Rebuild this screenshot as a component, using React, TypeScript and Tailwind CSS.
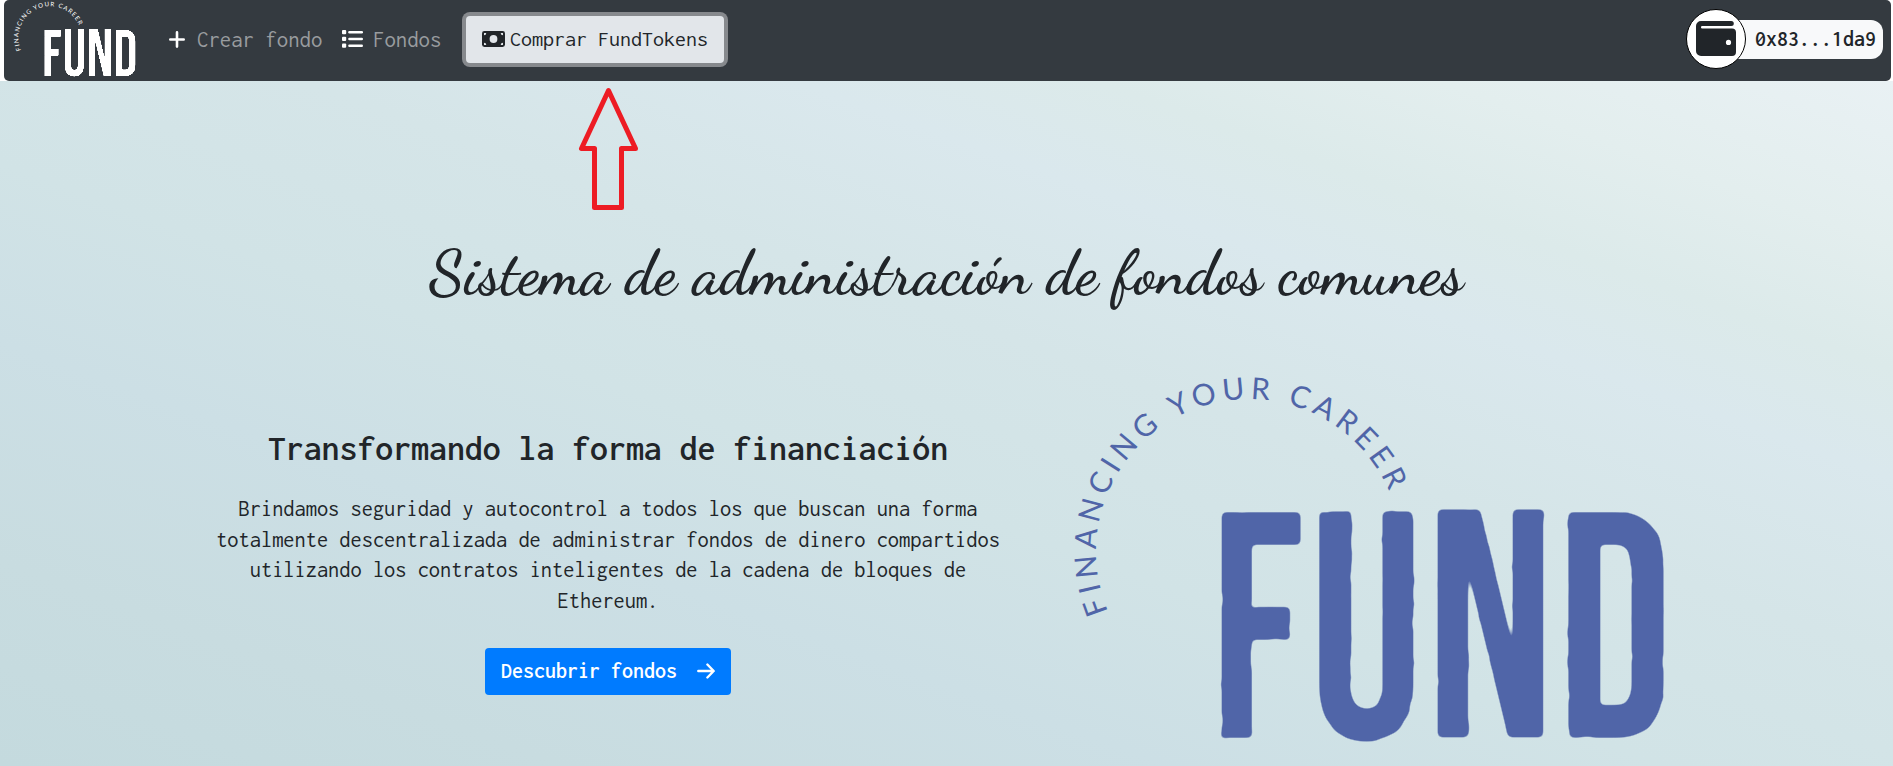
type LetterProps = { char: string; x: number; y: number; sx: number; sy: number; filter: string };

function StampLetter({ char, x, y, sx, sy, filter }: LetterProps) {
  return (
    <g filter={filter}>
      <text
        transform={`translate(${x} ${y}) scale(${sx} ${sy})`}
        fontSize={320}
        fontFamily="'Bebas Neue', 'Roboto Condensed', Roboto, sans-serif"
      >
        {char}
      </text>
    </g>
  );
}

function Logo({ id, color, className, arcWeight = 400 }: { id: string; color: string; className: string; arcWeight?: number }) {
  const stamp = `url(#${id}-stamp)`;
  return (
    <svg viewBox="0 0 620 390" className={className} role="img" aria-label="Fund">
      <defs>
        <filter id={`${id}-stamp`} x="-10%" y="-10%" width="120%" height="120%" colorInterpolationFilters="sRGB">
          <feTurbulence type="fractalNoise" baseFrequency="0.05" numOctaves={3} seed={4} result="noise" />
          <feDisplacementMap in="SourceGraphic" in2="noise" scale={2.5} xChannelSelector="R" yChannelSelector="G" />
          <feGaussianBlur stdDeviation="2.4" />
          <feComponentTransfer result="shape">
            <feFuncA type="linear" slope="5" intercept="-1.8" />
          </feComponentTransfer>
          <feFlood floodColor={color} />
          <feComposite in2="shape" operator="in" />
        </filter>
        <path id={`${id}-arc`} d="M 48.1 241.5 A 152.8 152.8 0 1 1 341.600 181.300" />
      </defs>
      <text fill={color} fontFamily="Lato, sans-serif" fontSize={30} fontWeight={arcWeight}>
        <textPath href={`#${id}-arc`} textLength={478.5} lengthAdjust="spacing">
          FINANCING YOUR CAREER
        </textPath>
      </text>
      <StampLetter char="F" x={151} y={367.5} sx={0.84} sy={1.005} filter={stamp} />
      <StampLetter char="U" x={249} y={368} sx={0.89} sy={1.01} filter={stamp} />
      <StampLetter char="N" x={365.5} y={367} sx={0.95} sy={1.015} filter={stamp} />
      <StampLetter char="D" x={497} y={367.5} sx={0.89} sy={1.005} filter={stamp} />
    </svg>
  );
}

function PlusIcon() {
  return (
    <svg viewBox="0 0 16 17" className="h-[17px] w-4" stroke="#fff" strokeWidth="2.6" strokeLinecap="round">
      <path d="M8 1.4V15.6M1.3 8.5H14.7" />
    </svg>
  );
}

function ListIcon() {
  return (
    <svg viewBox="0 0 21 18" className="h-[18px] w-[21px]" fill="#fff">
      <rect x="0" y="0" width="4.2" height="4.2" rx="1" />
      <rect x="0" y="6.8" width="4.2" height="4.2" rx="1" />
      <rect x="0" y="13.6" width="4.2" height="4.2" rx="1" />
      <rect x="6.2" y="0.9" width="14.8" height="2.5" rx="1.2" />
      <rect x="6.2" y="7.7" width="14.8" height="2.5" rx="1.2" />
      <rect x="6.2" y="14.5" width="14.8" height="2.5" rx="1.2" />
    </svg>
  );
}

function CashIcon() {
  return (
    <svg viewBox="0 0 23 16" className="h-4 w-[23px]">
      <rect width="23" height="16" rx="2.4" fill="#212529" />
      <circle cx="11.5" cy="8" r="3.9" fill="#e2e6ea" />
      <path
        d="M2 4.300V2H4.300A2.300 2.300 0 0 1 2 4.300ZM21 4.300V2H18.700A2.300 2.300 0 0 0 21 4.300ZM2 11.700V14H4.300A2.300 2.300 0 0 0 2 11.700ZM21 11.700V14H18.700A2.300 2.300 0 0 1 21 11.700Z"
        fill="#e2e6ea"
      />
    </svg>
  );
}

function WalletIcon() {
  return (
    <svg viewBox="0 0 40 35" className="h-[35px] w-10">
      <path
        fill="#212529"
        fillRule="evenodd"
        d="M5 0H35.3A2.5 2.5 0 0 1 35.3 5H6.2A1.2 1.2 0 0 0 6.2 7.5H36A4 4 0 0 1 40 11.500V31A4 4 0 0 1 36 35H5A5 5 0 0 1 0 30V5A5 5 0 0 1 5 0ZM32.500 18.800A2.600 2.600 0 1 0 32.500 24A2.600 2.600 0 1 0 32.500 18.800Z"
      />
    </svg>
  );
}

export default function App() {
  return (
    <div className="relative h-[766px] w-full overflow-hidden bg-white font-['Inconsolata','Liberation_Mono',monospace] text-[22.4px] text-[#212529]">
      <nav className="mr-0.5 ml-1 flex h-[81px] items-center rounded-[5px] bg-[#343a40] pb-[3px]">
        <Logo id="brand" color="#ffffff" arcWeight={400} className="ml-[7px] h-[81px] w-[128px] shrink-0 self-start" />
        <a className="ml-[30px] flex items-center gap-3 text-[22.8px] text-[#999c9f]">
          <PlusIcon />
          <span className="w-[124px] whitespace-nowrap">Crear fondo</span>
        </a>
        <a className="ml-[21px] flex items-center gap-[10px] text-[22.8px] text-[#999c9f]">
          <ListIcon />
          <span className="w-[67px]">Fondos</span>
        </a>
        <button className="ml-[26px] flex h-[47px] w-[258px] items-center gap-[5px] rounded-[4px] bg-[#e2e6ea] pb-px pl-4 text-[22px] ring-4 ring-[#86898d]">
          <CashIcon />
          <span className="whitespace-nowrap">Comprar FundTokens</span>
        </button>
        <div className="relative mr-2 ml-auto flex h-[39px] w-[167px] items-center rounded-[12px] bg-[#f8f9fa] pb-px pl-[39px] text-[22px] font-semibold">
          <div className="absolute -left-[30px] flex size-[60px] items-center justify-center rounded-full border border-black bg-white">
            <WalletIcon />
          </div>
          0x83...1da9
        </div>
      </nav>
      <main className="flex h-[685px] flex-col bg-[linear-gradient(to_top_right,#c4dade_0%,#c8dce0_15%,#ccdfe5_31%,#d1e3e6_44%,#d5e5e8_58%,#dae8ed_71%,#dceaea_79%,#e3eeee_88%,#e9f1f4_100%)]">
        <h1 className="mt-[152px] text-center font-['Dancing_Script','Liberation_Serif',cursive] text-[62.6px] leading-[80px] font-semibold whitespace-nowrap">
          Sistema de administración de fondos comunes
        </h1>
        <div className="flex flex-1 pl-[208px]">
          <section className="flex w-[800px] shrink-0 flex-col items-center pt-[115px] text-center">
            <h2 className="text-[35.8px] leading-[40px] font-semibold whitespace-nowrap">
              Transformando la forma de financiación
            </h2>
            <p className="mt-[26px] leading-[30.6px]">
              Brindamos seguridad y autocontrol a todos los que buscan una forma totalmente descentralizada de
              administrar fondos de dinero compartidos utilizando los contratos inteligentes de la cadena de bloques de
              Ethereum.
            </p>
            <button className="mt-[32px] flex h-[47px] w-[246px] items-center gap-5 rounded-[4px] bg-[#007bff] pb-[2px] pl-4 text-[22px] font-semibold whitespace-nowrap text-white">
              Descubrir fondos
              <svg viewBox="0 0 18 16" className="h-4 w-[18px]" fill="none" stroke="#fff" strokeWidth="2.4" strokeLinecap="round" strokeLinejoin="round">
                <path d="M1.300 8H16.500M10.400 1.500L16.700 8L10.400 14.500" />
              </svg>
            </button>
          </section>
          <Logo id="hero" color="#5065a8" className="mt-[57px] ml-[52px] h-[390px] w-[620px] shrink-0" />
        </div>
      </main>
      <svg viewBox="0 0 62 124" className="absolute top-[87px] left-[577px] h-[124px] w-[62px]" fill="none" stroke="#ed1c24" strokeWidth="5" strokeLinejoin="round">
        <path d="M31.500 3.500L4.500 61.500H17.500V120.500H44.500V61.500H58.500Z" />
      </svg>
    </div>
  );
}
